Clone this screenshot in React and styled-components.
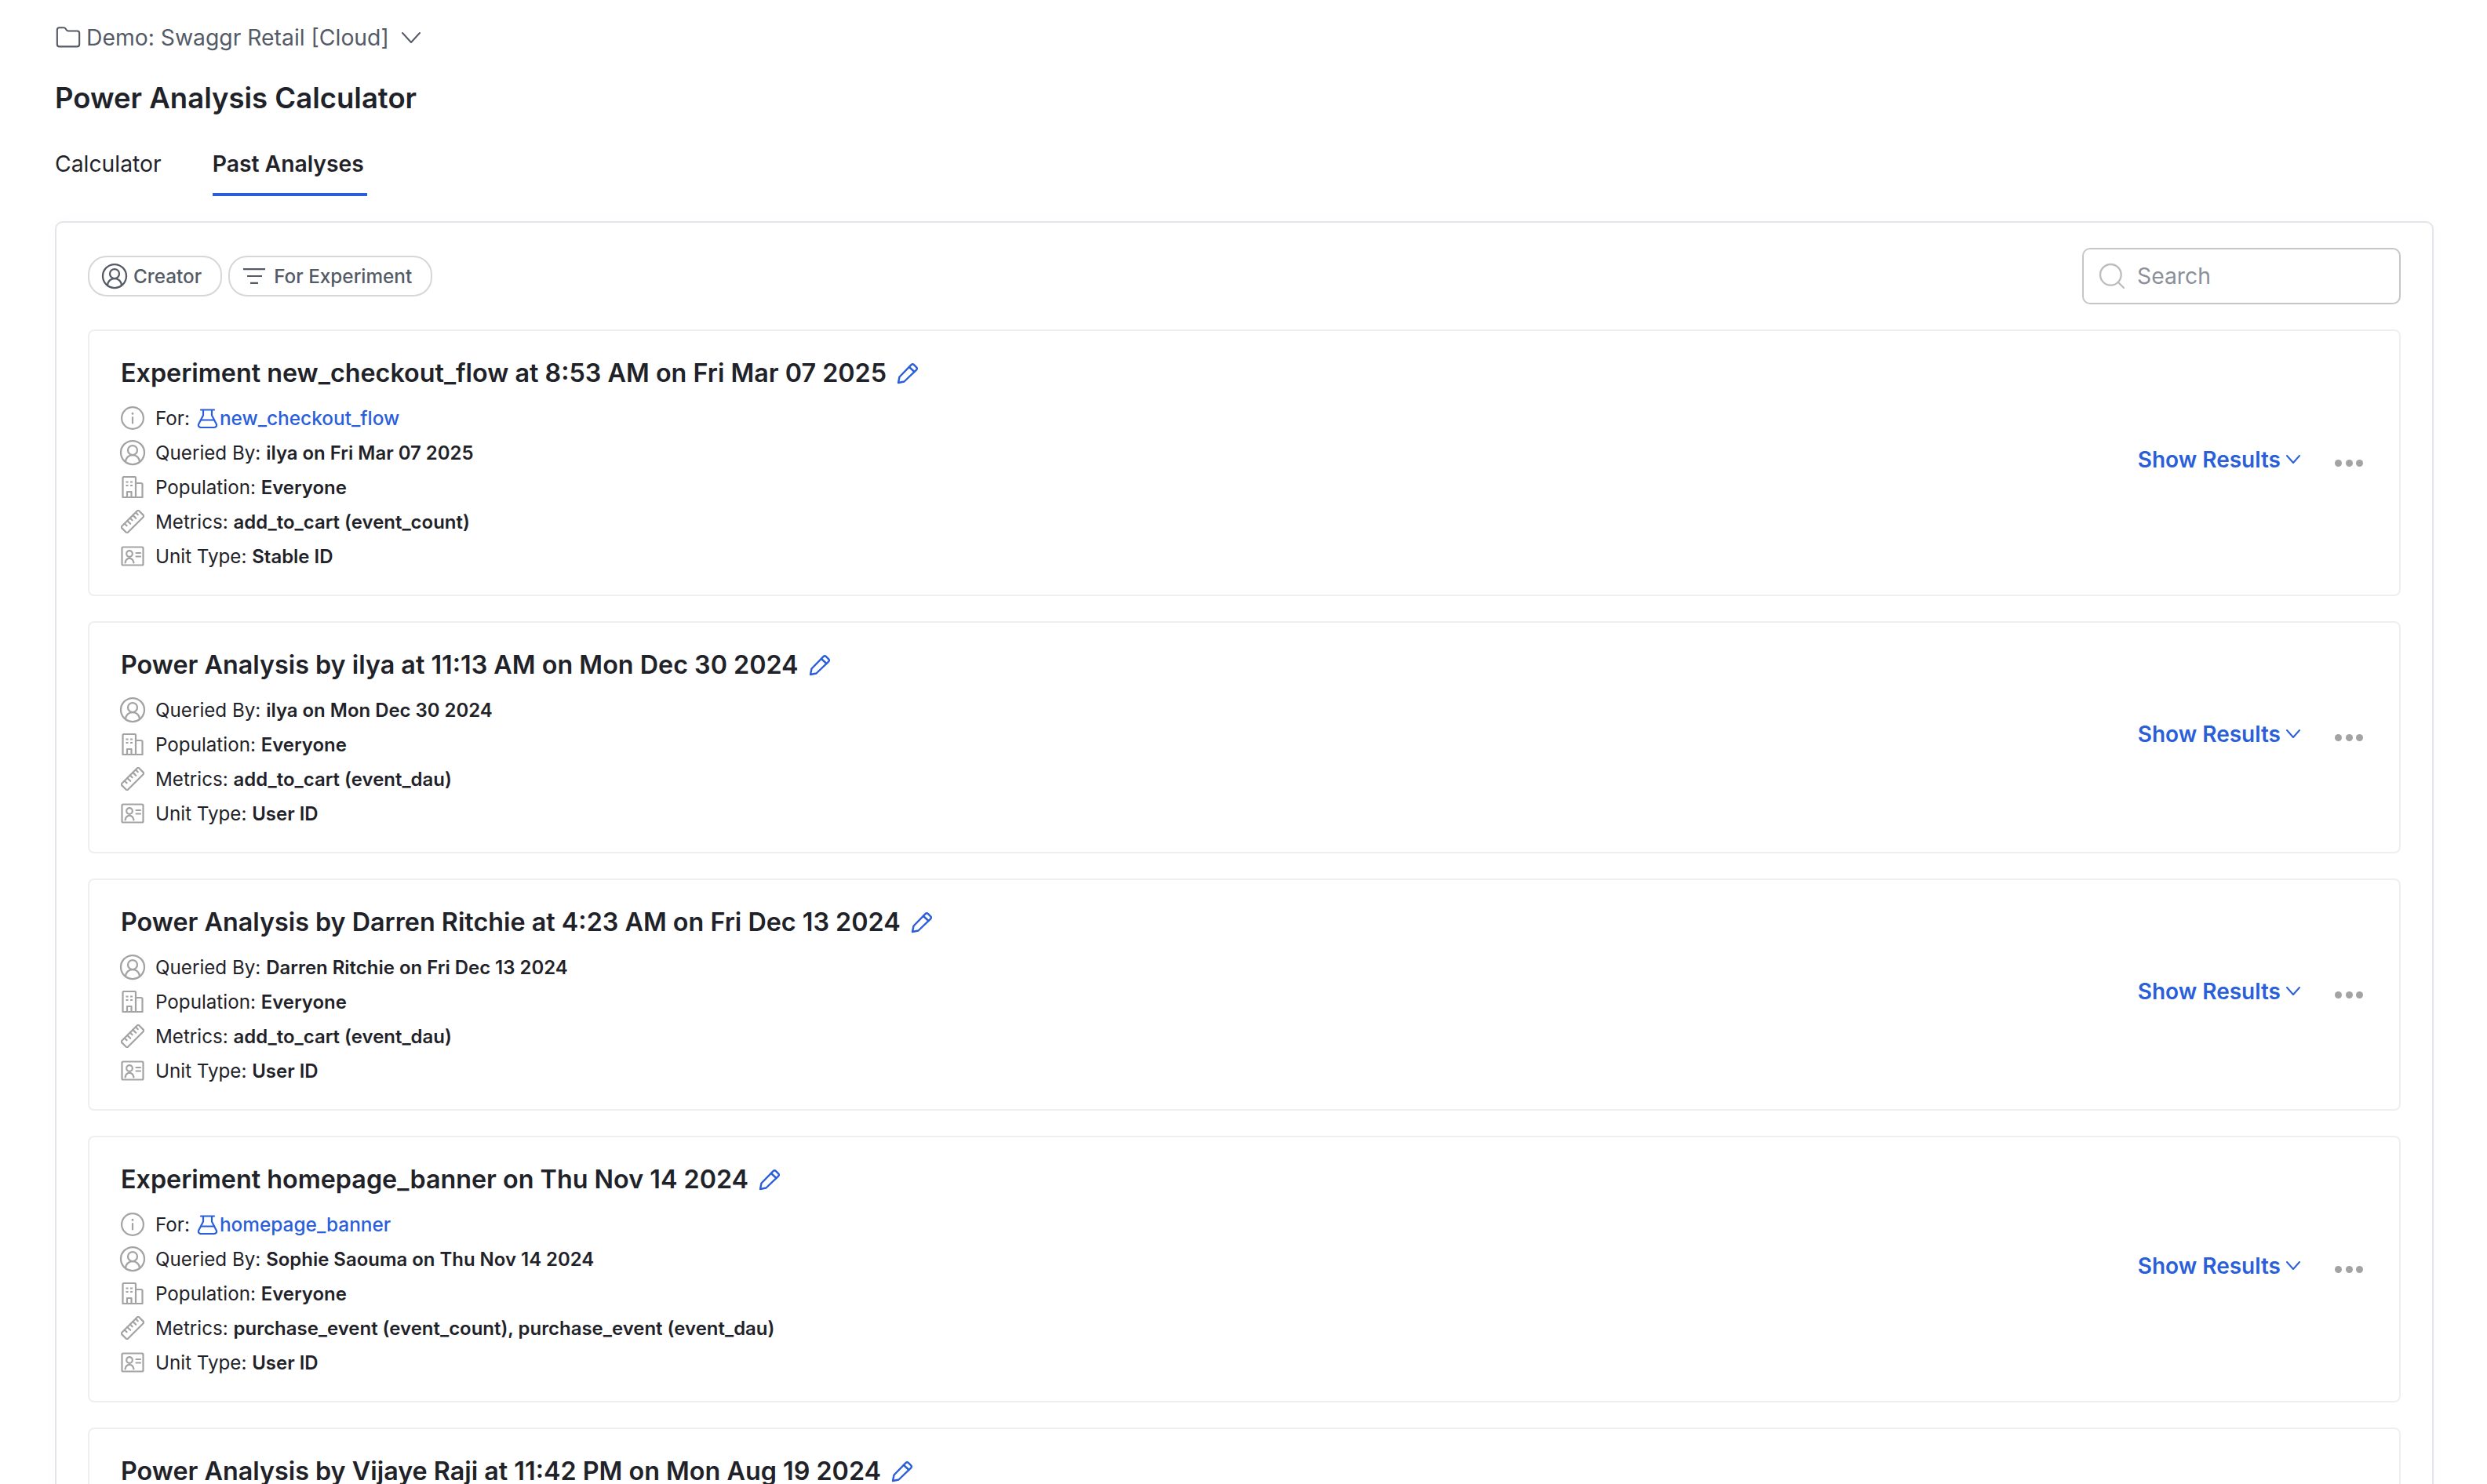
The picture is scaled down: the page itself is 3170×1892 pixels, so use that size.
import React from 'react';
import styled, { createGlobalStyle } from 'styled-components';
import { CircleUserRound, Folder, Search } from 'lucide-react';

const GlobalStyle = createGlobalStyle`
  html, body {
    margin: 0;
    height: 100%;
    overflow: hidden;
    background: #fff;
  }
  body {
    font-family: Inter, "Liberation Sans", sans-serif;
    color: #1f2329;
  }
`;

const Chevron = ({ width, height, strokeWidth = 2 }) => (
  <svg width={width} height={height} viewBox={`0 0 ${width} ${height}`} fill="none" stroke="currentColor" strokeWidth={strokeWidth} strokeLinecap="round" strokeLinejoin="round">
    <path d={`M1 1L${width / 2} ${height - 1}L${width - 1} 1`} />
  </svg>
);

const PencilIcon = () => (
  <svg width="28" height="28" viewBox="0 0 28 28" fill="none" stroke="currentColor" strokeWidth="2.4" strokeLinejoin="round" strokeLinecap="round">
    <path d="M2 26l1.500-7.500L18.500 3.200a2.500 2.500 0 0 1 3.500 0l3 3a2.500 2.500 0 0 1 0 3.500L9.500 24.500Z" />
    <path d="M16 6l6.500 6" />
  </svg>
);

const InfoIcon = () => (
  <svg width="30" height="30" viewBox="0 0 30 30" fill="none" stroke="currentColor" strokeWidth="2.2" strokeLinecap="round">
    <circle cx="15" cy="15" r="13.900" />
    <path d="M15 14v7.500" />
    <path d="M15 9.200v.2" strokeWidth="2.800" />
  </svg>
);

const FlaskIcon = () => (
  <svg width="27" height="27" viewBox="0 0 27 27" fill="none" stroke="currentColor" strokeWidth="2.2" strokeLinejoin="round" strokeLinecap="round">
    <path d="M5 2.500h17M8 2.500v7L2.300 20.500C1.200 23 2.600 25 5 25h17c2.400 0 3.800-2 2.700-4.500L19 9.500v-7" />
    <path d="M5 15.500h17" />
  </svg>
);

const BuildingIcon = () => (
  <svg width="28" height="28" viewBox="0 0 28 28" fill="none" stroke="currentColor" strokeWidth="2.2" strokeLinejoin="round">
    <path d="M1.500 27V2.500A1.500 1.500 0 0 1 3 1h13.500A1.500 1.500 0 0 1 18 2.500V27Z" />
    <path d="M18 9h7A1.500 1.500 0 0 1 26.500 10.500V27H18" />
    <path d="M7 27v-7h5.500v7" />
    <path d="M5.500 7.500h3M11 7.500h3M5.500 12h3M11 12h3" />
  </svg>
);

const RulerIcon = () => (
  <svg width="30" height="30" viewBox="0 0 30 30" fill="none" stroke="currentColor" strokeWidth="2.2" strokeLinejoin="round" strokeLinecap="round">
    <g transform="rotate(-45 15 15)">
      <rect x="-0.500" y="9.500" width="31" height="11" rx="1.500" />
      <path d="M6 9.500v4M11 9.500v5.500M16 9.500v4M21 9.500v5.500M26 9.500v4" />
    </g>
  </svg>
);

const IdCardIcon = () => (
  <svg width="30" height="26" viewBox="0 0 30 26" fill="none" stroke="currentColor" strokeWidth="2.2" strokeLinejoin="round" strokeLinecap="round">
    <rect x="1.500" y="1.500" width="27" height="23" rx="1.500" />
    <circle cx="11" cy="10" r="3.800" />
    <path d="M5.500 21.500c.6-3.700 2.800-5.700 5.500-5.700s4.900 2 5.500 5.700" />
    <path d="M19.500 9h5.500M19.500 13.500h5.500" />
  </svg>
);

const FilterIcon = () => (
  <svg width="28" height="20" viewBox="0 0 28 20" fill="none" stroke="currentColor" strokeWidth="2.2">
    <path d="M0 1.100h28M5 10h19M9 18.900h10" />
  </svg>
);

const analyses = [
  {
    title: 'Experiment new_checkout_flow at 8:53 AM on Fri Mar 07 2025',
    experiment: 'new_checkout_flow',
    by: 'ilya on Fri Mar 07 2025',
    metrics: 'add_to_cart (event_count)',
    unit: 'Stable ID',
  },
  {
    title: 'Power Analysis by ilya at 11:13 AM on Mon Dec 30 2024',
    by: 'ilya on Mon Dec 30 2024',
    metrics: 'add_to_cart (event_dau)',
    unit: 'User ID',
  },
  {
    title: 'Power Analysis by Darren Ritchie at 4:23 AM on Fri Dec 13 2024',
    by: 'Darren Ritchie on Fri Dec 13 2024',
    metrics: 'add_to_cart (event_dau)',
    unit: 'User ID',
  },
  {
    title: 'Experiment homepage_banner on Thu Nov 14 2024',
    experiment: 'homepage_banner',
    by: 'Sophie Saouma on Thu Nov 14 2024',
    metrics: 'purchase_event (event_count), purchase_event (event_dau)',
    unit: 'User ID',
  },
  {
    title: 'Power Analysis by Vijaye Raji at 11:42 PM on Mon Aug 19 2024',
    by: 'Vijaye Raji on Mon Aug 19 2024',
    metrics: 'add_to_cart (event_dau)',
    unit: 'User ID',
  },
];

function AnalysisCard({ item }) {
  return (
    <Card>
      <CardBody>
        <CardTitle>
          {item.title}
          <EditIcon><PencilIcon /></EditIcon>
        </CardTitle>
        {item.experiment && (
          <Row>
            <RowIcon><InfoIcon /></RowIcon>
            <span>For:</span>
            <ExperimentLink><FlaskIcon />{item.experiment}</ExperimentLink>
          </Row>
        )}
        <Row>
          <RowIcon><CircleUserRound size={36} strokeWidth={1.5} /></RowIcon>
          <span>Queried By: <b>{item.by}</b></span>
        </Row>
        <Row>
          <RowIcon><BuildingIcon /></RowIcon>
          <span>Population: <b>Everyone</b></span>
        </Row>
        <Row>
          <RowIcon><RulerIcon /></RowIcon>
          <span>Metrics: <b>{item.metrics}</b></span>
        </Row>
        <Row>
          <RowIcon><IdCardIcon /></RowIcon>
          <span>Unit Type: <b>{item.unit}</b></span>
        </Row>
      </CardBody>
      <Actions>
        <ShowResults>Show Results<Chevron width={18} height={11} /></ShowResults>
        <Dots><i /><i /><i /></Dots>
      </Actions>
    </Card>
  );
}

export default function App() {
  return (
    <Page>
      <GlobalStyle />
      <ProjectPicker>
        <Folder size={34} strokeWidth={1.5} />
        <span>Demo: Swaggr Retail [Cloud]</span>
        <Chevron width={24} height={14} />
      </ProjectPicker>
      <Heading>Power Analysis Calculator</Heading>
      <Tabs>
        <Tab>Calculator</Tab>
        <Tab active>Past Analyses</Tab>
      </Tabs>
      <Panel>
        <Toolbar>
          <Filters>
            <Chip><CircleUserRound size={36} strokeWidth={1.5} />Creator</Chip>
            <Chip wide><FilterIcon />For Experiment</Chip>
          </Filters>
          <SearchBox>
            <Search size={40} strokeWidth={1.4} />
            Search
          </SearchBox>
        </Toolbar>
        <CardList>
          {analyses.map(item => <AnalysisCard key={item.title} item={item} />)}
        </CardList>
      </Panel>
    </Page>
  );
}

const Page = styled.div`
  height: 1892px;
  overflow: hidden;
  box-sizing: border-box;
  padding: 30px 68px 0 70px;
`;

const ProjectPicker = styled.div`
  display: flex;
  align-items: center;
  gap: 6px;
  height: 36px;
  font-size: 28.3px;
  color: #545b66;
  svg:last-child {
    margin-left: 10px;
  }
`;

const Heading = styled.h1`
  margin: 35px 0 0;
  font-size: 36.5px;
  line-height: 48px;
  font-weight: 600;
  color: #1f2329;
`;

const Tabs = styled.div`
  display: flex;
  gap: 61px;
  margin-top: 40px;
`;

const Tab = styled.div`
  font-size: 28.3px;
  line-height: 40px;
  padding: 0 4px 17px 0;
  font-weight: ${props => (props.active ? 600 : 400)};
  border-bottom: 4px solid ${props => (props.active ? '#2b5fd9' : 'transparent')};
`;

const Panel = styled.div`
  margin-top: 32px;
  padding: 32px 40px;
  border: 2px solid #e2e5e9;
  border-radius: 10px;
  box-shadow: 0 0 24px rgba(0, 0, 0, 0.02);
`;

const Toolbar = styled.div`
  display: flex;
  justify-content: space-between;
  align-items: center;
`;

const Filters = styled.div`
  display: flex;
  gap: 8px;
`;

const Chip = styled.div`
  display: flex;
  align-items: center;
  gap: ${props => (props.wide ? 11 : 6)}px;
  height: 48px;
  padding: 0 24px 0 ${props => (props.wide ? 17 : 14)}px;
  border: 2px solid #d5d7db;
  border-radius: 24px;
  font-size: 24.3px;
  font-weight: 500;
  color: #545b66;
`;

const SearchBox = styled.div`
  display: flex;
  align-items: center;
  gap: 12px;
  width: 406px;
  height: 72px;
  box-sizing: border-box;
  padding: 0 16px;
  border: 2px solid #c6c6c6;
  border-radius: 10px;
  font-size: 28.3px;
  color: #8a8f99;
  svg {
    color: #bdbdbd;
  }
`;

const CardList = styled.div`
  display: flex;
  flex-direction: column;
  gap: 32px;
  margin-top: 32px;
`;

const Card = styled.div`
  display: flex;
  justify-content: space-between;
  align-items: center;
  padding: 30px 40px 27px;
  border: 2px solid #eeeff1;
  border-radius: 8px;
`;

const CardBody = styled.div`
  display: flex;
  flex-direction: column;
`;

const CardTitle = styled.div`
  display: flex;
  align-items: center;
  gap: 13px;
  margin-bottom: 11px;
  font-size: 32.3px;
  line-height: 48px;
  font-weight: 600;
`;

const EditIcon = styled.span`
  display: flex;
  color: #2b5fd9;
`;

const Row = styled.div`
  display: flex;
  align-items: center;
  height: 44px;
  font-size: 24.2px;
  white-space: pre;
  b {
    font-size: 23.95px;
    font-weight: 600;
  }
`;

const RowIcon = styled.span`
  display: flex;
  justify-content: center;
  align-items: center;
  width: 30px;
  margin-right: 14px;
  color: #a3a3a3;
  svg {
    flex-shrink: 0;
  }
`;

const ExperimentLink = styled.span`
  display: flex;
  align-items: center;
  gap: 2px;
  margin-left: 9px;
  font-size: 24.4px;
  font-weight: 500;
  color: #2b5fd9;
`;

const Actions = styled.div`
  display: flex;
  align-items: center;
  gap: 44px;
  margin-right: 6px;
`;

const ShowResults = styled.div`
  display: flex;
  align-items: center;
  gap: 7px;
  margin-bottom: 12px;
  font-size: 28px;
  font-weight: 600;
  color: #2b5fd9;
`;

const Dots = styled.div`
  display: flex;
  gap: 4.5px;
  margin-bottom: 2px;
  i {
    width: 9px;
    height: 9px;
    border-radius: 50%;
    background: #a3a3a3;
  }
`;
